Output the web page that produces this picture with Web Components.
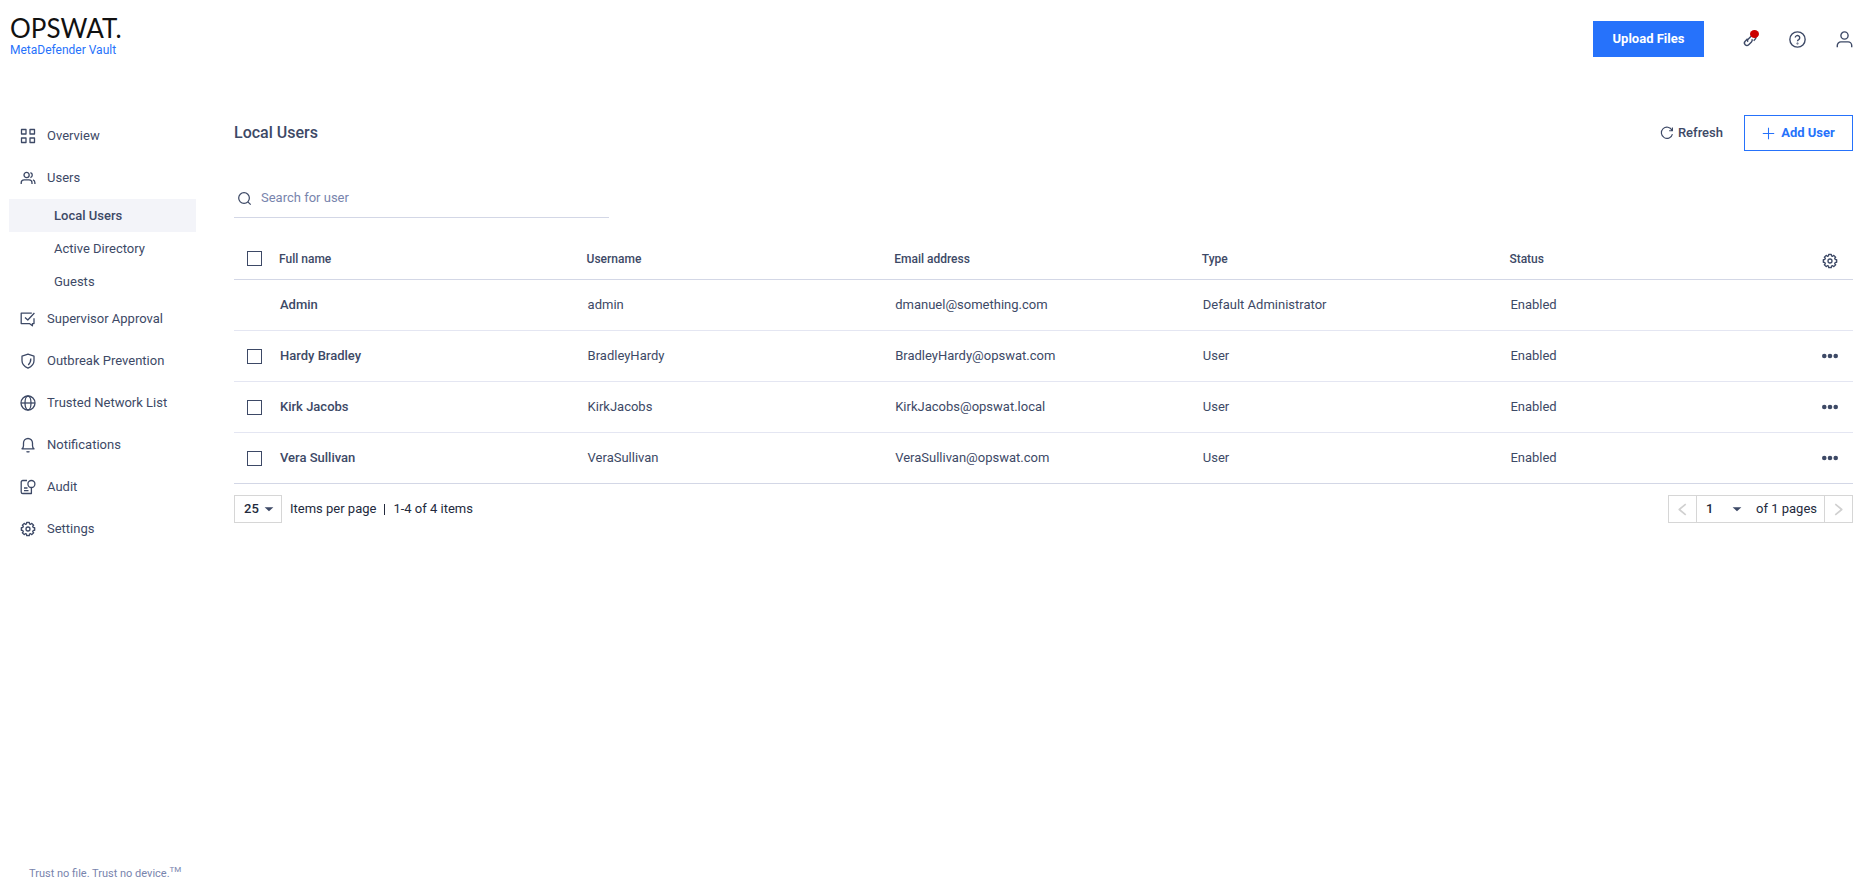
<!DOCTYPE html>
<html lang="en">
<head>
<meta charset="utf-8">
<title>MetaDefender Vault - Local Users</title>
<style>
  :root {
    --text: #3d4966;
    --text-strong: #232a3d;
    --muted: #7884ad;
    --primary: #2672fb;
    --line: #d3d7e6;
    --line-light: #e4e6f2;
    --control: #d6d6d6;
    --selected: #f3f4f9;
  }
  body {
    margin: 0;
    background: #fff;
    color: var(--text);
    font: 13px/18px Roboto, "Liberation Sans", sans-serif;
  }
</style>
</head>
<body>
<vault-app>
  <vault-header slot="header"></vault-header>
  <vault-sidebar slot="sidebar">
    <vault-nav-item icon="overview">Overview</vault-nav-item>
    <vault-nav-item icon="users">Users</vault-nav-item>
    <vault-nav-item sub selected>Local Users</vault-nav-item>
    <vault-nav-item sub>Active Directory</vault-nav-item>
    <vault-nav-item sub>Guests</vault-nav-item>
    <vault-nav-item icon="approval">Supervisor Approval</vault-nav-item>
    <vault-nav-item icon="shield">Outbreak Prevention</vault-nav-item>
    <vault-nav-item icon="globe">Trusted Network List</vault-nav-item>
    <vault-nav-item icon="bell">Notifications</vault-nav-item>
    <vault-nav-item icon="audit">Audit</vault-nav-item>
    <vault-nav-item icon="gear">Settings</vault-nav-item>
  </vault-sidebar>
  <vault-toolbar heading="Local Users"></vault-toolbar>
  <vault-search placeholder="Search for user"></vault-search>
  <vault-user-table></vault-user-table>
  <vault-pager></vault-pager>
</vault-app>

<script>
// All icons share a 16x16 box and are stroked with the current colour.
const ICONS = {
    overview: `<path d="M1.5 1.5h4.5v4.5h-4.5zM10 1.5h4.5v4.5h-4.5zM1.5 10h4.5v4.5h-4.5zM10 10h4.5v4.5h-4.5z"/>`,
    users: `<circle cx="6.6" cy="5" r="2.6"/><path d="M1.2 14v-1.2a3 3 0 0 1 3-3h4.8a3 3 0 0 1 3 3v1.2M10.4 2.5a2.6 2.6 0 0 1 0 5M12.9 9.9a3 3 0 0 1 2 2.9v1.2"/>`,
    approval: `<path d="M11.8 2.2h-10.6v10.4h8.2l3 2.2v-2.2h1.6v-5.4M5 6.4l2.8 2.6 6.6-7"/>`,
    shield: `<path d="M8 1.2l6 2v4.6c0 3.6-2.4 5.8-6 7.4c-3.6-1.6-6-3.8-6-7.4v-4.6z"/><path d="M10.8 5.6c.1 2.8-.6 4.6-2.6 6.4"/>`,
    globe: `<circle cx="8" cy="8" r="7"/><ellipse cx="8" cy="8" rx="3" ry="7"/><path d="M1 8h14"/>`,
    bell: `<path d="M2 11.8c1.2-.8 1.5-1.8 1.5-3.4v-2.4a4.5 4.5 0 0 1 9 0v2.4c0 1.6.3 2.6 1.5 3.4zM6.6 14.3a1.6 1.3 0 0 0 2.8 0"/>`,
    audit: `<path d="M7 1.5h-4.2a1.6 1.6 0 0 0-1.6 1.6v9.8a1.6 1.6 0 0 0 1.6 1.6h8.6v-5.5M4 9h3.5M4 11.7h4.5"/><circle cx="11.4" cy="5" r="3.5"/>`,
    gear: `<path d="${gearPath()}"/><circle cx="8" cy="8" r="2"/>`,
    search: `<circle cx="7.5" cy="7.5" r="5.7"/><path d="M11.6 11.6l3 3"/>`,
    refresh: `<path d="M13.7 4.9a6.4 6.4 0 1 0 .5 4.3M14.2 1.6v3.8h-3.8"/>`,
    plus: `<path d="M8 1v14M1 8h14"/>`,
    help: `<circle cx="8" cy="8" r="7.2"/><path d="M5.9 6.2a2.1 2.1 0 1 1 3.2 1.9c-.8.4-1.1.8-1.1 1.5"/><circle cx="8" cy="11.8" r=".3"/>`,
    user: `<circle cx="8" cy="4.2" r="3.4"/><path d="M1.2 15.2v-1.6a3.4 3.4 0 0 1 3.4-3.4h6.8a3.4 3.4 0 0 1 3.4 3.4v1.6"/>`,
    link: `<path d="M5.2 7.4l-2.2 2.2a2.3 2.3 0 0 0 3.3 3.3l2.6-2.6a2.3 2.3 0 0 0 .4-2.700M5.600 10.300a2 2 0 0 1 .2-2.600l3.200-3.200a2.300 2.300 0 0 1 3.300 3.300l-1.300 1.300"/>`,
    left: `<path d="M12 1.500l-8 6.500 8 6.500" stroke-width="2"/>`,
    right: `<path d="M4 1.500l8 6.500-8 6.500" stroke-width="2"/>`,
    more: `<g fill="currentColor" stroke="none"><circle cx="2.3" cy="8" r="2.3"/><circle cx="8" cy="8" r="2.3"/><circle cx="13.7" cy="8" r="2.3"/></g>`,
    caret: `<path d="M3 6h10l-5 4.500z" fill="currentColor" stroke="none"/>`
};

// Eight rounded teeth around the centre of the icon box.
function gearPath() {
    const points = [];
    for (let i = 0; i < 8; i++) {
        for (const [offset, radius] of [[-15, 5.4], [-11, 6.8], [11, 6.8], [15, 5.4]]) {
            const a = (i * 45 + offset) * Math.PI / 180;
            points.push((8 + radius * Math.cos(a)).toFixed(2) + " " + (8 + radius * Math.sin(a)).toFixed(2));
        }
    }
    return "M" + points.join("L") + "Z";
}

class VaultIcon extends HTMLElement {
    constructor() {
        super();
        this.attachShadow({ mode: "open" });
    }

    connectedCallback() {
        this.shadowRoot.innerHTML = `
      <style>
        :host { display: block; flex: none; width: 16px; height: 16px; }
        svg { display: block; width: 100%; height: 100%; overflow: visible; }
      </style>
      <svg viewBox="0 0 16 16" fill="none" stroke="currentColor" stroke-width="1.3"
        stroke-linejoin="round" aria-hidden="true">${ICONS[this.getAttribute("name")]}</svg>
    `;
    }
}

class VaultApp extends HTMLElement {
    constructor() {
        super();
        this.attachShadow({ mode: "open" });
        this.shadowRoot.innerHTML = `
      <style>
        :host {
          display: grid;
          grid-template: auto 1fr / 196px minmax(0, 1fr);
          column-gap: 38px;
          min-height: 100vh;
        }
        .header { grid-column: 1 / -1; }
        .sidebar { display: grid; }
        main { padding: 37px 20px 24px 0; }
      </style>
      <div class="header"><slot name="header"></slot></div>
      <div class="sidebar"><slot name="sidebar"></slot></div>
      <main><slot></slot></main>
    `;
    }
}

class VaultHeader extends HTMLElement {
    constructor() {
        super();
        this.attachShadow({ mode: "open" });
        this.shadowRoot.innerHTML = `
      <style>
        :host { display: block; }
        header {
          display: flex;
          align-items: center;
          justify-content: space-between;
          height: 78px;
          padding: 0 20px 0 10px;
          box-sizing: border-box;
        }
        .logo { color: #111; text-decoration: none; padding-bottom: 6px; }
        .logo span { display: block; font: 26px/28px Lato, sans-serif; }
        .logo small { display: block; color: var(--primary); font-size: 12px; line-height: 16px; }
        .actions { display: flex; align-items: center; gap: 30px; }
        button { border: 0; padding: 0; background: none; color: inherit; font: inherit; cursor: pointer; }
        .upload {
          width: 111px;
          height: 36px;
          margin-right: 8px;
          background: var(--primary);
          color: #fff;
          font-weight: 700;
        }
        .icon { position: relative; }
        .icon vault-icon { width: 17px; height: 17px; }
        .dot {
          position: absolute;
          top: -1px;
          right: 0;
          width: 9px;
          height: 8px;
          border-radius: 50%;
          background: #cb0000;
        }
      </style>
      <header>
        <a class="logo" href="#"><span>OPSWAT.</span><small>MetaDefender Vault</small></a>
        <div class="actions">
          <button class="upload">Upload Files</button>
          <button class="icon" aria-label="Connections"><vault-icon name="link"></vault-icon><i class="dot"></i></button>
          <button class="icon" aria-label="Help"><vault-icon name="help"></vault-icon></button>
          <button class="icon" aria-label="Account"><vault-icon name="user"></vault-icon></button>
        </div>
      </header>
    `;
    }
}

class VaultSidebar extends HTMLElement {
    constructor() {
        super();
        this.attachShadow({ mode: "open" });
        this.shadowRoot.innerHTML = `
      <style>
        :host {
          display: flex;
          flex-direction: column;
          justify-content: space-between;
          padding: 37px 0 0 9px;
        }
        footer { padding: 24px 0 4px 20px; color: var(--muted); font-size: 11px; line-height: 16px; }
        sup { font-size: 8px; line-height: 1; }
      </style>
      <nav><slot></slot></nav>
      <footer>Trust no file. Trust no device.<sup>TM</sup></footer>
    `;
    }
}

class VaultNavItem extends HTMLElement {
    constructor() {
        super();
        this.attachShadow({ mode: "open" });
    }

    connectedCallback() {
        const icon = this.getAttribute("icon");
        this.shadowRoot.innerHTML = `
      <style>
        :host { display: block; }
        a {
          display: flex;
          align-items: center;
          gap: 11px;
          height: 42px;
          padding-left: 11px;
          color: inherit;
          text-decoration: none;
        }
        :host([sub]) a { height: 33px; padding-left: 45px; }
        :host([selected]) a { background: var(--selected); font-weight: 500; }
      </style>
      <a href="#">${icon ? `<vault-icon name="${icon}"></vault-icon>` : ""}<slot></slot></a>
    `;
    }
}

class VaultToolbar extends HTMLElement {
    constructor() {
        super();
        this.attachShadow({ mode: "open" });
    }

    connectedCallback() {
        this.shadowRoot.innerHTML = `
      <style>
        :host { display: flex; align-items: center; justify-content: space-between; }
        h1 { margin: 0; font-size: 16px; line-height: 20px; font-weight: 500; }
        div { display: flex; align-items: center; gap: 21px; }
        button {
          display: flex;
          align-items: center;
          justify-content: center;
          padding: 0;
          border: 0;
          background: none;
          color: inherit;
          font: inherit;
          font-weight: 500;
          cursor: pointer;
        }
        .refresh { gap: 4px; }
        .refresh vault-icon { width: 14px; height: 14px; }
        .add {
          gap: 6px;
          width: 109px;
          height: 36px;
          border: 1px solid var(--primary);
          color: var(--primary);
          font-weight: 700;
        }
        .add vault-icon { width: 13px; height: 13px; }
      </style>
      <h1>${this.getAttribute("heading")}</h1>
      <div>
        <button class="refresh"><vault-icon name="refresh"></vault-icon>Refresh</button>
        <button class="add"><vault-icon name="plus"></vault-icon>Add User</button>
      </div>
    `;
    }
}

class VaultSearch extends HTMLElement {
    constructor() {
        super();
        this.attachShadow({ mode: "open" });
    }

    connectedCallback() {
        const text = this.getAttribute("placeholder");
        this.shadowRoot.innerHTML = `
      <style>
        :host { display: block; margin-top: 28px; }
        label {
          display: flex;
          align-items: center;
          gap: 9px;
          width: 375px;
          max-width: 100%;
          height: 39px;
          padding-left: 3px;
          border-bottom: 1px solid var(--line);
          box-sizing: border-box;
        }
        vault-icon { width: 15px; height: 15px; }
        input {
          flex: 1;
          min-width: 0;
          padding: 0;
          border: 0;
          outline: 0;
          background: none;
          color: inherit;
          font: inherit;
        }
        input::placeholder { color: var(--muted); opacity: 1; }
      </style>
      <label><vault-icon name="search"></vault-icon><input type="text" placeholder="${text}" aria-label="${text}"></label>
    `;
    }
}

class VaultUserTable extends HTMLElement {
    constructor() {
        super();
        this.attachShadow({ mode: "open" });
        this.users = [
            { name: "Admin", username: "admin", email: "dmanuel@something.com", type: "Default Administrator", status: "Enabled", builtin: true },
            { name: "Hardy Bradley", username: "BradleyHardy", email: "BradleyHardy@opswat.com", type: "User", status: "Enabled" },
            { name: "Kirk Jacobs", username: "KirkJacobs", email: "KirkJacobs@opswat.local", type: "User", status: "Enabled" },
            { name: "Vera Sullivan", username: "VeraSullivan", email: "VeraSullivan@opswat.com", type: "User", status: "Enabled" }
        ];
    }

    connectedCallback() {
        this.shadowRoot.innerHTML = `
      <style>
        :host { display: block; margin-top: 20px; }
        table { width: 100%; table-layout: fixed; border-collapse: separate; border-spacing: 0; }
        th, td { padding: 0; text-align: left; vertical-align: middle; box-sizing: border-box; }
        th { height: 42px; border-bottom: 1px solid var(--line); font-size: 12px; font-weight: 500; }
        td { height: 51px; padding-left: 1px; border-bottom: 1px solid var(--line-light); }
        tr:last-child td { border-bottom-color: var(--line); }
        .check { width: 45px; padding-left: 13px; }
        .more { width: 36px; padding-left: 5px; }
        .name { font-weight: 500; }
        input {
          appearance: none;
          display: block;
          width: 15px;
          height: 15px;
          margin: 0;
          border: 1px solid var(--text);
          background: #fff;
        }
        button { display: block; padding: 0; border: 0; background: none; color: inherit; cursor: pointer; }
        th button { padding-top: 4px; }
      </style>
      <table>
        <thead>
          <tr>
            <th class="check"><input type="checkbox" aria-label="Select all users"></th>
            <th>Full name</th>
            <th>Username</th>
            <th>Email address</th>
            <th>Type</th>
            <th>Status</th>
            <th class="more"><button aria-label="Table settings"><vault-icon name="gear"></vault-icon></button></th>
          </tr>
        </thead>
        <tbody>${this.users.map((user) => this.row(user)).join("")}</tbody>
      </table>
    `;
    }

    // The built-in administrator can be neither selected nor edited.
    row(user) {
        const check = user.builtin ? "" : `<input type="checkbox" aria-label="Select ${user.name}">`;
        const more = user.builtin ? "" : `<button aria-label="Actions for ${user.name}"><vault-icon name="more"></vault-icon></button>`;
        return `
          <tr>
            <td class="check">${check}</td>
            <td class="name">${user.name}</td>
            <td>${user.username}</td>
            <td>${user.email}</td>
            <td>${user.type}</td>
            <td>${user.status}</td>
            <td class="more">${more}</td>
          </tr>`;
    }
}

class VaultPager extends HTMLElement {
    constructor() {
        super();
        this.attachShadow({ mode: "open" });
        this.shadowRoot.innerHTML = `
      <style>
        :host {
          display: flex;
          justify-content: space-between;
          margin-top: 11px;
          color: var(--text-strong);
        }
        .size, .pages, label { display: flex; align-items: center; }
        .size, .pages { height: 28px; }
        .size { gap: 8px; }
        .size i { width: 1px; height: 11px; background: currentColor; }
        .select { display: grid; align-items: center; justify-items: end; }
        .select > * { grid-area: 1 / 1; }
        select {
          appearance: none;
          width: 100%;
          height: 26px;
          padding: 0 9px;
          border: 0;
          background: none;
          color: inherit;
          font: inherit;
          font-weight: 500;
        }
        .select vault-icon { width: 14px; height: 14px; margin-right: 5px; color: var(--text); pointer-events: none; }
        .size .select { width: 46px; border: 1px solid var(--control); }
        .pages { border: 1px solid var(--control); box-sizing: border-box; }
        .pages .select { width: 52px; }
        .pages label { gap: 7px; padding-right: 7px; }
        button {
          display: grid;
          place-items: center;
          width: 28px;
          height: 26px;
          padding: 0;
          border: 0;
          background: none;
          color: #d0d0d0;
        }
        button:first-child { border-right: 1px solid var(--control); }
        button:last-child { border-left: 1px solid var(--control); }
        button vault-icon { width: 13px; height: 13px; }
      </style>
      <div class="size">
        <label class="select"><select aria-label="Items per page"><option>25</option></select><vault-icon name="caret"></vault-icon></label>
        <span>Items per page</span><i></i><span>1-4 of 4 items</span>
      </div>
      <div class="pages">
        <button disabled aria-label="Previous page"><vault-icon name="left"></vault-icon></button>
        <label>
          <span class="select"><select aria-label="Page"><option>1</option></select><vault-icon name="caret"></vault-icon></span>
          <span>of 1 pages</span>
        </label>
        <button disabled aria-label="Next page"><vault-icon name="right"></vault-icon></button>
      </div>
    `;
    }
}

customElements.define("vault-icon", VaultIcon);
customElements.define("vault-app", VaultApp);
customElements.define("vault-header", VaultHeader);
customElements.define("vault-sidebar", VaultSidebar);
customElements.define("vault-nav-item", VaultNavItem);
customElements.define("vault-toolbar", VaultToolbar);
customElements.define("vault-search", VaultSearch);
customElements.define("vault-user-table", VaultUserTable);
customElements.define("vault-pager", VaultPager);
</script>
</body>
</html>
